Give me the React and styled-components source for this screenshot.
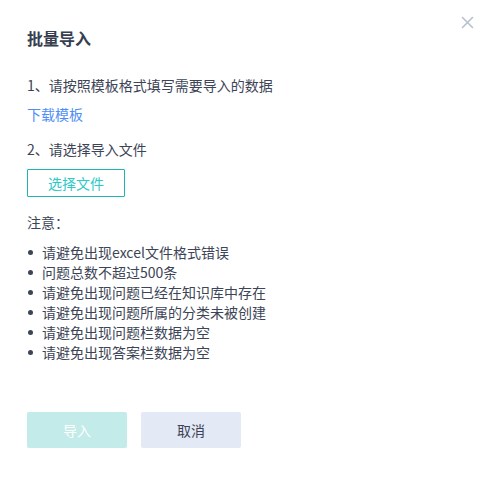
import React from "react";
import styled, { createGlobalStyle } from "styled-components";

const Global = createGlobalStyle`
  html, body { margin: 0; padding: 0; background: #ffffff; }
  body { font-family: "Noto Sans CJK SC", "Noto Sans", sans-serif; }
  * { box-sizing: border-box; }
`;

const Dialog = styled.div`
  position: relative;
  width: 493px;
  height: 479px;
  background: #ffffff;
  padding: 26px 27px 0 27px;
  display: flex;
  flex-direction: column;
  align-items: flex-start;
  color: #3c4456;
`;

const Title = styled.h2`
  margin: 0;
  font-size: 16px;
  line-height: 24px;
  font-weight: 700;
  color: #363e50;
`;

const Close = styled.button`
  position: absolute;
  top: 16px;
  right: 19px;
  width: 13px;
  height: 13px;
  padding: 0;
  border: none;
  background: transparent;
  cursor: pointer;
  display: flex;
`;

const Text = styled.p`
  margin: ${(p) => p.$mt || 0}px 0 0 0;
  font-size: 14px;
  line-height: 20px;
  color: #3c4456;
`;

const Link = styled.a`
  margin-top: ${(p) => p.$mt || 0}px;
  font-size: 14px;
  line-height: 20px;
  color: #4f8ef5;
  text-decoration: none;
  cursor: pointer;
`;

const OutlineButton = styled.button`
  margin-top: ${(p) => p.$mt || 0}px;
  width: 98px;
  height: 28px;
  border: 1px solid #1db4b1;
  border-radius: 1px;
  background: #ffffff;
  color: #2cc9c6;
  font-family: inherit;
  font-size: 14px;
  line-height: 20px;
  padding: 0;
  cursor: pointer;
`;

const List = styled.ul`
  margin: 10px 0 0 0;
  padding: 0;
  list-style: none;
  display: flex;
  flex-direction: column;
`;

const Item = styled.li`
  display: flex;
  align-items: center;
  font-size: 14px;
  line-height: 20px;
  color: #3c4456;
  &::before {
    content: "";
    width: 5px;
    height: 5px;
    border-radius: 50%;
    background: #3c4456;
    margin: 0 9px 0 1px;
    flex: none;
  }
`;

const Footer = styled.div`
  margin-top: 50px;
  display: flex;
  gap: 14px;
`;

const FooterButton = styled.button`
  width: 100px;
  height: 36px;
  border: none;
  border-radius: 2px;
  font-family: inherit;
  font-size: 14px;
  padding: 0;
  cursor: pointer;
  background: ${(p) => (p.$primary ? "#c2ebe9" : "#e3e9f5")};
  color: ${(p) => (p.$primary ? "#ffffff" : "#3c4456")};
`;

const notes = [
  "请避免出现excel文件格式错误",
  "问题总数不超过500条",
  "请避免出现问题已经在知识库中存在",
  "请避免出现问题所属的分类未被创建",
  "请避免出现问题栏数据为空",
  "请避免出现答案栏数据为空",
];

export default function App() {
  return (
    <>
      <Global />
      <Dialog>
        <Close aria-label="关闭">
          <svg width="13" height="13" viewBox="0 0 13 13">
            <path
              d="M1.5 1.5 L11.5 11.5 M11.5 1.5 L1.5 11.5"
              stroke="#b8bfcd"
              strokeWidth="1.6"
              strokeLinecap="round"
            />
          </svg>
        </Close>
        <Title>批量导入</Title>
        <Text $mt={25}>1、请按照模板格式填写需要导入的数据</Text>
        <Link $mt={9}>下载模板</Link>
        <Text $mt={15}>2、请选择导入文件</Text>
        <OutlineButton $mt={10}>选择文件</OutlineButton>
        <Text $mt={15}>注意：</Text>
        <List>
          {notes.map((n) => (
            <Item key={n}>{n}</Item>
          ))}
        </List>
        <Footer>
          <FooterButton $primary>导入</FooterButton>
          <FooterButton>取消</FooterButton>
        </Footer>
      </Dialog>
    </>
  );
}
